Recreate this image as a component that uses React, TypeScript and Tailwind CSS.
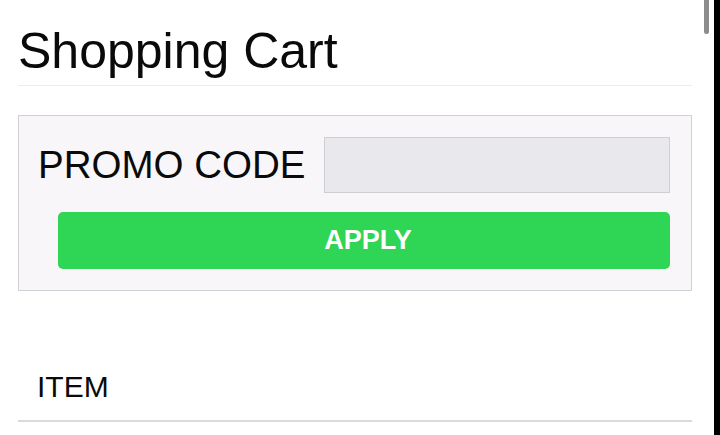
import React from 'react';

const App = () => {
    return (
        <div className="flex h-[435px] overflow-hidden bg-white font-['Liberation_Sans',Arial,sans-serif] text-[#0a0a0a]">
            <div className="relative flex-1 pl-[18px] pr-[22px]">

                {/* Scrollbar thumb */}
                <div className="absolute right-[5px] top-0 h-[34px] w-[5px] rounded-b-full bg-[#8c8c8c]" />

                {/* Title */}
                <h1 className="pt-[27px] text-[50px] leading-[49px]">Shopping Cart</h1>
                <hr className="mt-[9px] border-[#ececec]" />

                {/* Promo box */}
                <div className="mt-[29px] border border-[#d3d0d5] bg-[#f9f6fa] pt-[21px] pb-[21px] pl-[19px] pr-[21px]">
                    <div className="flex items-center gap-[19px]">
                        <span className="text-[38.5px] leading-[38px] whitespace-nowrap">PROMO CODE</span>
                        <input
                            type="text"
                            className="h-[56px] flex-1 border border-[#cfcfd3] bg-[#e9e9ed] outline-none"
                        />
                    </div>
                    <button className="mt-[19px] ml-[20px] flex h-[57px] w-[612px] items-center justify-center rounded-[5px] bg-[#2fd555] pl-[8px] text-[27px] font-bold text-white">
                        APPLY
                    </button>
                </div>

                {/* Item header */}
                <div className="mt-[81px] pl-[19px] text-[30px] leading-[30px]">ITEM</div>
                <div className="mt-[18px] h-[2px] bg-[#dadada]" />
            </div>
            <div className="w-[7px] bg-black" />
        </div>
    );
};

export default App;
